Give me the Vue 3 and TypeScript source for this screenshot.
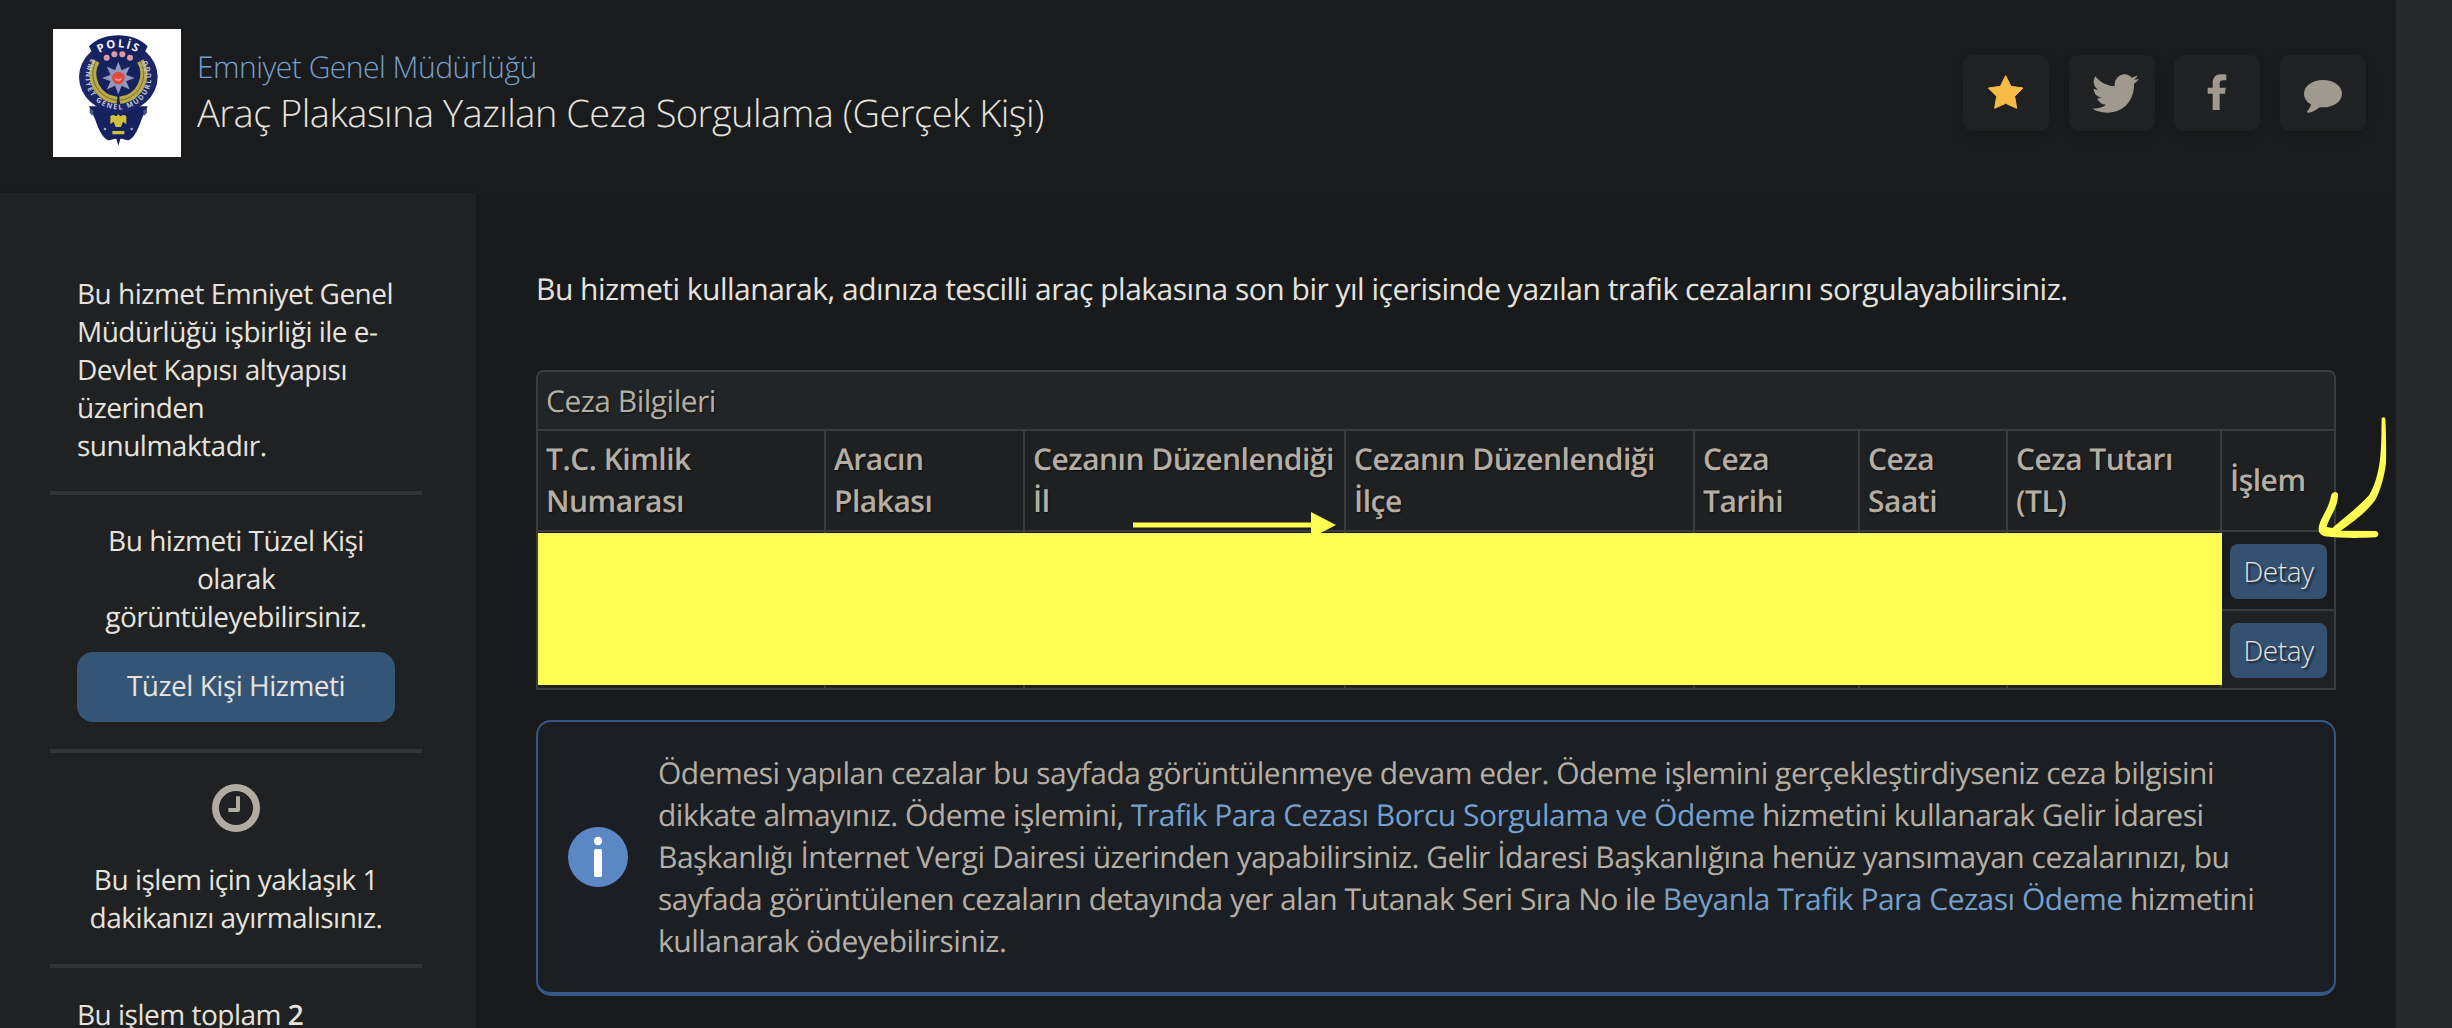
<script setup lang="ts">
interface Column {
  lines: string[]
}

const columns: Column[] = [
  { lines: ['T.C. Kimlik', 'Numarası'] },
  { lines: ['Aracın', 'Plakası'] },
  { lines: ['Cezanın Düzenlendiği', 'İl'] },
  { lines: ['Cezanın Düzenlendiği', 'İlçe'] },
  { lines: ['Ceza', 'Tarihi'] },
  { lines: ['Ceza', 'Saati'] },
  { lines: ['Ceza Tutarı', '(TL)'] },
  { lines: ['İşlem'] },
]

const rows: number[] = [1, 2]
const petals: number[] = [0, 45, 90, 135, 180, 225, 270, 315]
</script>

<template>
  <div class="page">
    <div class="content">
      <header class="header">
        <svg class="logo" viewBox="0 0 384 384">
          <rect width="384" height="384" fill="#fff" />
          <path d="M108 232 L126 270 C138 306 152 330 166 334 C176 334 184 328 190 330 L196 350 L202 330 C208 328 216 334 226 334 C240 330 254 306 266 270 L284 232Z" fill="#16225f" />
          <path d="M110 238l12 8-4 14-8-8zM282 238l-12 8 4 14 8-8z" fill="#4c5688" />
          <ellipse cx="196" cy="144" rx="118" ry="106" fill="#1b2764" />
          <path d="M108 52 C150 8 242 8 284 52 L264 92 C230 60 162 60 128 92Z" fill="#16225f" />
          <ellipse cx="196" cy="146" rx="84" ry="78" fill="#16225f" />
          <path d="M130 96 C104 140 128 206 192 214" fill="none" stroke="#b9aa45" stroke-width="21" />
          <path d="M262 96 C288 140 264 206 200 214" fill="none" stroke="#b9aa45" stroke-width="21" />
          <path d="M130 96 C104 140 128 206 192 214M262 96 C288 140 264 206 200 214" fill="none" stroke="#6e6a45" stroke-width="3" />
          <g fill="#9299bd">
            <path v-for="angle in petals" :key="angle" d="M196 98l13 34-13 14-13-14z" :transform="`rotate(${angle} 196 147)`" />
          </g>
          <circle cx="196" cy="147" r="19" fill="#e2493f" />
          <path d="M187 149q9 9 18 0" fill="none" stroke="#f3b6b0" stroke-width="4" />
          <g fill="#dc9aa6">
            <circle cx="161" cy="86" r="9" /><circle cx="184" cy="76" r="9" />
            <circle cx="208" cy="76" r="9" /><circle cx="231" cy="86" r="9" />
          </g>
          <path d="M172 262c8-8 14-2 18 0l6-6 6 6c4-2 10-8 18 0v24l-10-8-6 16h-16l-6-16-10 8zM178 306h36v10h-36z" fill="#d3bd3c" />
          <circle cx="156" cy="300" r="4" fill="#9da4c4" /><circle cx="236" cy="300" r="4" fill="#9da4c4" />
          <path id="arc-top" d="M122 88 C160 45 234 45 272 88" fill="none" />
          <path id="arc-ring" d="M119 84 C74 140 100 236 196 242 C292 236 318 140 273 84" fill="none" />
          <text class="logo-title"><textPath href="#arc-top" startOffset="50%" text-anchor="middle">POLİS</textPath></text>
          <text class="logo-ring"><textPath href="#arc-ring" startOffset="50%" text-anchor="middle">EMNİYET GENEL MÜDÜRLÜĞÜ</textPath></text>
        </svg>
        <div class="titles">
          <a class="agency">Emniyet Genel Müdürlüğü</a>
          <h1 class="service">Araç Plakasına Yazılan Ceza Sorgulama (Gerçek Kişi)</h1>
        </div>
        <nav class="share">
          <a class="share-item">
            <svg viewBox="99 105 258 228"><path fill="#f5bb45" stroke="#f5bb45" stroke-width="3" stroke-linejoin="round" d="M227 167L243 199L279 204L254 229L260 265L227 250L194 265L200 229L175 204L211 199Z" /></svg>
          </a>
          <a class="share-item">
            <svg viewBox="417 105 258 228"><path fill="#a0998d" d="M496 169C510 187 532 198 554 199C552 180 565 163 584 163C593 163 600 167 605 173C611 172 617 169 623 166C621 171 617 176 612 179C617 179 622 178 627 176C623 182 618 187 612 191C614 235 585 278 531 278C514 278 498 274 486 265C502 267 516 263 528 254C515 254 505 246 502 234C506 235 510 235 514 233C500 230 491 219 491 206C495 208 499 209 504 209C491 200 487 183 496 169Z" /></svg>
          </a>
          <a class="share-item">
            <svg viewBox="733 105 258 228"><path fill="#a0998d" d="M890 164V181H881C872 181 870 185 870 191V203H888L886 221H870V270H849V221H834V203H849V190C849 172 858 163 874 163C882 163 886 163 890 164Z" /></svg>
          </a>
          <a class="share-item">
            <svg viewBox="1050 105 258 228"><path fill="#a0998d" d="M1179 180C1211 180 1236 198 1236 221C1236 244 1211 262 1179 262L1169 262C1158 270 1145 279 1132 278C1128 276 1142 264 1143 253C1130 246 1122 234 1122 221C1122 198 1147 180 1179 180Z" /></svg>
          </a>
        </nav>
      </header>

      <div class="body">
        <aside class="sidebar">
          <p class="side-text">Bu hizmet Emniyet Genel<br>Müdürlüğü işbirliği ile e-<br>Devlet Kapısı altyapısı<br>üzerinden<br>sunulmaktadır.</p>
          <hr class="divider">
          <p class="side-text centered">Bu hizmeti Tüzel Kişi<br>olarak<br>görüntüleyebilirsiniz.</p>
          <a class="side-button">Tüzel Kişi Hizmeti</a>
          <hr class="divider">
          <svg class="clock" viewBox="0 0 144 144">
            <circle cx="72" cy="72" r="61.5" fill="none" stroke="#b2aba1" stroke-width="21" />
            <path d="M78 37V78H49" fill="none" stroke="#b2aba1" stroke-width="12" stroke-linejoin="round" />
          </svg>
          <p class="side-text centered">Bu işlem için yaklaşık 1<br>dakikanızı ayırmalısınız.</p>
          <hr class="divider">
          <p class="side-text last">Bu işlem toplam <b>2</b></p>
        </aside>

        <main class="main">
          <p class="intro">Bu hizmeti kullanarak, adınıza tescilli araç plakasına son bir yıl içerisinde yazılan trafik cezalarını sorgulayabilirsiniz.</p>

          <section class="table">
            <div class="caption">Ceza Bilgileri</div>
            <div class="row head">
              <div v-for="(column, i) in columns" :key="i" class="cell">
                <span v-for="line in column.lines" :key="line">{{ line }}</span>
              </div>
            </div>
            <div v-for="row in rows" :key="row" class="row data">
              <div v-for="n in 7" :key="n" class="cell"></div>
              <div class="cell"><button class="detail">Detay</button></div>
            </div>
            <div class="redaction"></div>
            <svg class="arrow-straight" viewBox="0 0 203 26">
              <path fill="#fffc52" d="M0 10.5H178V0L203 13L178 26V15.5H0Z" />
            </svg>
            <svg class="arrow-hand" viewBox="470 45 216 375">
              <path fill="#fffc52" d="M664 55Q669 48 675 55C677 95 678 140 677 188C673 226 662 266 646 298C624 332 574 370 541 392L647 393Q655 396 654 404Q652 411 646 412C600 415 540 415 492 409Q474 402 475 386C476 358 504 332 513 284Q518 273 528 277Q534 280 533 287C532 324 504 356 499 381L516 384C548 356 602 314 626 286C644 256 653 220 658 186C664 145 663 95 664 55Z" />
            </svg>
          </section>

          <section class="notice">
            <svg class="info" viewBox="0 0 60 60">
              <circle cx="30" cy="30" r="30" fill="#5b87c5" />
              <circle cx="30" cy="14" r="4.2" fill="#fff" />
              <rect x="26" y="22" width="8" height="28" rx="1.6" fill="#fff" />
            </svg>
            <p class="notice-text">Ödemesi yapılan cezalar bu sayfada görüntülenmeye devam eder. Ödeme işlemini gerçekleştirdiyseniz ceza bilgisini<br>dikkate almayınız. Ödeme işlemini, <a>Trafik Para Cezası Borcu Sorgulama ve Ödeme</a> hizmetini kullanarak Gelir İdaresi<br>Başkanlığı İnternet Vergi Dairesi üzerinden yapabilirsiniz. Gelir İdaresi Başkanlığına henüz yansımayan cezalarınızı, bu<br>sayfada görüntülenen cezaların detayında yer alan Tutanak Seri Sıra No ile <a>Beyanla Trafik Para Cezası Ödeme</a> hizmetini<br>kullanarak ödeyebilirsiniz.</p>
          </section>
        </main>
      </div>
    </div>
  </div>
</template>

<style>
body {
  margin: 0;
  background: #27282a;
}
</style>

<style scoped>
.page {
  width: 2452px;
  height: 1028px;
  overflow: hidden;
  background: #27282a;
  color: #e6e3de;
  font-family: "Open Sans", "Noto Sans", sans-serif;
  font-size: 30px;
  line-height: 42px;
  letter-spacing: -0.5px;
  text-rendering: geometricPrecision;
  -webkit-font-smoothing: antialiased;
}
.content {
  display: flex;
  flex-direction: column;
  width: 2396px;
  height: 1028px;
  background: #191a1b;
}
.header {
  display: flex;
  align-items: flex-start;
  flex: none;
  height: 193px;
  box-sizing: border-box;
  padding: 29px 30px 0 53px;
  background: #1a1b1c;
}
.logo {
  display: block;
  width: 128px;
  height: 128px;
}
.logo-title {
  fill: #f2f3f8;
  font-size: 34px;
  font-weight: 700;
  letter-spacing: 5px;
}
.logo-ring {
  fill: #c3c8dc;
  font-size: 21px;
  font-weight: 700;
  letter-spacing: 5px;
}
.titles {
  margin: 17px 0 0 16px;
  white-space: nowrap;
  font-weight: 300;
}
.agency {
  display: block;
  height: 41px;
  color: #75a0cd;
}
.service {
  margin: 0;
  font-size: 38px;
  line-height: 52px;
  font-weight: 300;
  letter-spacing: -0.52px;
}
.share {
  display: flex;
  gap: 19.7px;
  margin: 26px 0 0 auto;
}
.share-item {
  width: 86px;
  height: 76px;
  border-radius: 9px;
  background: #1f2122;
  box-shadow: 0 4px 14px rgba(0, 0, 0, 0.16);
}
.share-item svg {
  display: block;
  width: 86px;
  height: 76px;
}
.body {
  display: flex;
  flex: 1;
  min-height: 0;
}
.sidebar {
  display: flex;
  flex-direction: column;
  flex: none;
  width: 476px;
  box-sizing: border-box;
  padding: 82px 54px 0 50px;
  background: #1f2122;
  box-shadow: 0 0 10px rgba(0, 0, 0, 0.18);
}
.side-text {
  margin: 0 27px;
  font-size: 28px;
  line-height: 38px;
  white-space: nowrap;
}
.side-text b {
  font-weight: 600;
}
.centered {
  text-align: center;
}
.last {
  margin-top: 1px;
}
.divider {
  flex: none;
  width: 372px;
  height: 4px;
  margin: 27px 0;
  border: 0;
  background: #303436;
}
.divider:first-of-type {
  margin-top: 26px;
}
.side-button {
  flex: none;
  height: 70px;
  margin: 16px 27px 0;
  border-radius: 16px;
  background: #355577;
  font-size: 28px;
  line-height: 69px;
  text-align: center;
}
.clock {
  flex: none;
  width: 48px;
  height: 48px;
  margin: 4px auto 29px;
}
.main {
  flex: 1;
  padding: 75px 60px 0;
}
.intro {
  margin: 0 0 60px;
  white-space: nowrap;
}
.table {
  position: relative;
  width: 1800px;
  box-sizing: border-box;
  border: 2px solid #3a3d3f;
  border-bottom: 0;
  border-radius: 8px 8px 0 0;
  color: #b5aea4;
  text-shadow: 1px 1px 2px rgba(0, 0, 0, 0.6);
}
.caption {
  height: 42px;
  padding: 8px 8px 7px;
  border-bottom: 2px solid #3a3d3f;
  border-radius: 6px 6px 0 0;
  background: #212527;
}
.row {
  display: grid;
  grid-template-columns: 288px 199px 321px 349px 165px 148px 214px 112px;
  border-bottom: 2px solid #3a3d3f;
}
.head {
  height: 99px;
  background: #1e2021;
  font-weight: 600;
}
.head .cell {
  display: flex;
  flex-direction: column;
  justify-content: center;
  padding: 0 0 1px 8px;
  white-space: nowrap;
}
.data {
  height: 77px;
  background: #1a1b1c;
}
.data + .data {
  background: #1f2122;
}
.cell {
  border-right: 2px solid #3a3d3f;
}
.cell:last-child {
  border-right: 0;
}
.detail {
  display: block;
  width: 97px;
  height: 55px;
  margin: 12px 0 0 8px;
  padding: 0;
  border: 0;
  border-radius: 8px;
  background: #345172;
  color: #e6e3de;
  font: 300 28px/53px "Open Sans", "Noto Sans", sans-serif;
  letter-spacing: -0.4px;
  text-shadow: 2px 2px 2px rgba(0, 0, 0, 0.6);
}
.redaction {
  position: absolute;
  top: 161px;
  left: 0;
  width: 1684px;
  height: 152px;
  background: #fffc52;
}
.arrow-straight {
  position: absolute;
  top: 139.5px;
  left: 595px;
  width: 203px;
  height: 26px;
}
.arrow-hand {
  position: absolute;
  top: 43px;
  left: 1778.7px;
  width: 72px;
  height: 125px;
}
.notice {
  display: flex;
  align-items: center;
  box-sizing: border-box;
  width: 1800px;
  height: 276px;
  margin-top: 30px;
  padding: 0 30px;
  border: 2px solid #335789;
  border-bottom-width: 4px;
  border-radius: 15px;
  background: #1b1e22;
  color: #b5aea4;
}
.info {
  flex: none;
  width: 60px;
  height: 60px;
}
.notice-text {
  margin: 0 0 0 30px;
  white-space: nowrap;
}
.notice-text a {
  color: #75a0cd;
}
</style>
